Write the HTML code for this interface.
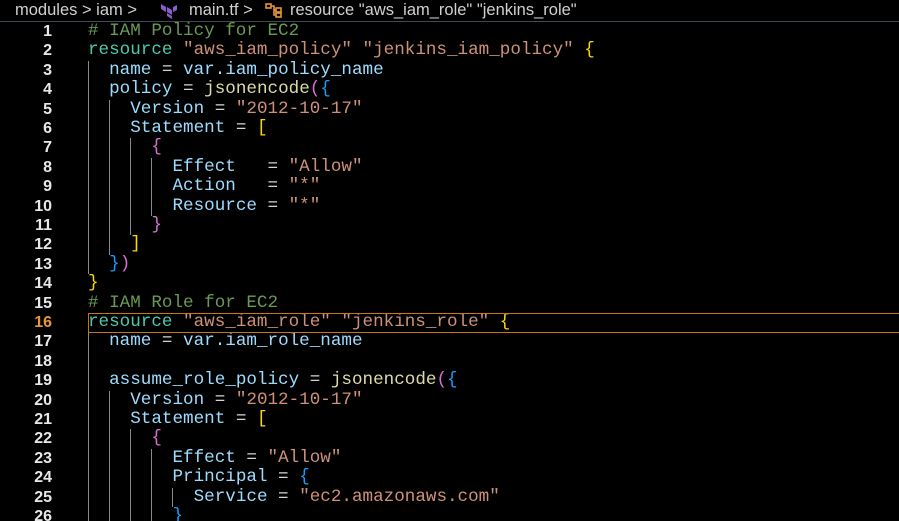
<!DOCTYPE html>
<html><head><meta charset="utf-8"><style>
html,body{margin:0;padding:0;background:#000;width:899px;height:521px;overflow:hidden;position:relative}
.hdr{position:absolute;left:0;top:0;width:899px;height:21px;border-bottom:1px solid #3b4b55;font:16.5px "Liberation Sans",sans-serif;color:#d0d0d0;white-space:pre;line-height:21px}
.hdr span.t{position:absolute;top:0}
.ln{position:absolute;left:0;width:52px;text-align:right;font:bold 16px "Liberation Sans",sans-serif;color:#e8e8e8;height:19.4px;line-height:19.4px}
.cd{position:absolute;left:88px;font:17.6px "Liberation Mono",monospace;color:#d4d4d4;white-space:pre;height:19.4px;line-height:19.4px}
.g{position:absolute;width:1px;background:#8a8a8a}
.c{color:#6a9955}.k{color:#4ec9b0}.s{color:#ce9178}.p{color:#9cdcfe}.f{color:#dcdcaa}
.y{color:#ffd700}.m{color:#da70d6}.b{color:#179fff}
</style></head><body>
<div class="hdr"><span class="t" style="left:15px">modules &gt; iam &gt;</span>
<svg style="position:absolute;left:160px;top:3px" width="18" height="16" viewBox="0 0 18 16"><path d="M1 1l5 3v5l-5-3z M7 4l5 3v5l-5-3z M13 4l4-2v5l-4 2z M7 10l5 3v3l-5-3z" fill="#8a5ccf"/></svg>
<span class="t" style="left:189px">main.tf &gt;</span>
<svg style="position:absolute;left:265px;top:3px" width="18" height="15" viewBox="0 0 18 15"><g fill="none" stroke="#e8963a" stroke-width="1.6"><rect x="1" y="1" width="5" height="4"/><rect x="11" y="5" width="5" height="4"/><rect x="11" y="10" width="5" height="4"/><path d="M6 3h3v9h2M9 7h2"/></g></svg>
<span class="t" style="left:290px">resource "aws_iam_role" "jenkins_role"</span></div>
<div id="c"></div>
<script>
const L=[
'<span class="c"># IAM Policy for EC2</span>',
'<span class="k">resource</span> <span class="s">"aws_iam_policy"</span> <span class="s">"jenkins_iam_policy"</span> <span class="y">{</span>',
'  <span class="p">name</span> = <span class="p">var.iam_policy_name</span>',
'  <span class="p">policy</span> = <span class="f">jsonencode</span><span class="m">(</span><span class="b">{</span>',
'    <span class="p">Version</span> = <span class="s">"2012-10-17"</span>',
'    <span class="p">Statement</span> = <span class="y">[</span>',
'      <span class="m">{</span>',
'        <span class="p">Effect</span>   = <span class="s">"Allow"</span>',
'        <span class="p">Action</span>   = <span class="s">"*"</span>',
'        <span class="p">Resource</span> = <span class="s">"*"</span>',
'      <span class="m">}</span>',
'    <span class="y">]</span>',
'  <span class="b">}</span><span class="m">)</span>',
'<span class="y">}</span>',
'<span class="c"># IAM Role for EC2</span>',
'<span class="k">resource</span> <span class="s">"aws_iam_role"</span> <span class="s">"jenkins_role"</span> <span class="y">{</span>',
'  <span class="p">name</span> = <span class="p">var.iam_role_name</span>',
'',
'  <span class="p">assume_role_policy</span> = <span class="f">jsonencode</span><span class="m">(</span><span class="b">{</span>',
'    <span class="p">Version</span> = <span class="s">"2012-10-17"</span>',
'    <span class="p">Statement</span> = <span class="y">[</span>',
'      <span class="m">{</span>',
'        <span class="p">Effect</span> = <span class="s">"Allow"</span>',
'        <span class="p">Principal</span> = <span class="b">{</span>',
'          <span class="p">Service</span> = <span class="s">"ec2.amazonaws.com"</span>',
'        <span class="b">}</span>'];
let h='';const T=i=>22+i*19.4;
L.forEach((t,i)=>{h+=`<div class="ln" style="top:${T(i)}px${i==15?';color:#e8963a':''}">${i+1}</div><div class="cd" style="top:${T(i)}px">${t}</div>`});
h+=`<div style="position:absolute;left:88px;top:${T(15)}px;width:811px;height:18.4px;border:1px solid #c8741a;border-right:none;box-sizing:content-box"></div>`;
const G=[[88,3,13],[109,5,12],[130,7,11],[151,8,10],[88,17,26],[109,20,26],[130,22,26],[151,23,26],[172,25,25]];
G.forEach(([x,a,b])=>{h+=`<div class="g" style="left:${x}px;top:${T(a-1)}px;height:${(b-a+1)*19.4}px"></div>`});
document.getElementById('c').innerHTML=h;
</script>
</body></html>
